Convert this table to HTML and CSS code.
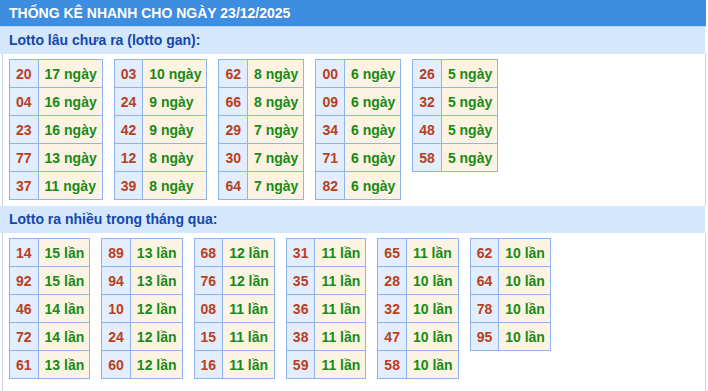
FILE: index.html
```html
<!DOCTYPE html>
<html lang="vi">
<head>
<meta charset="utf-8">
<link rel="stylesheet" href="styles.css">
</head>
<body>
<div class="page">
  <div class="header">THỐNG KÊ NHANH CHO NGÀY 23/12/2025</div>
  <div class="title">Lotto lâu chưa ra (lotto gan):</div>
  <div class="content">
    <table class="tbl">
      <tr><td class="num">20</td><td class="val">17 ngày</td></tr>
      <tr><td class="num">04</td><td class="val">16 ngày</td></tr>
      <tr><td class="num">23</td><td class="val">16 ngày</td></tr>
      <tr><td class="num">77</td><td class="val">13 ngày</td></tr>
      <tr><td class="num">37</td><td class="val">11 ngày</td></tr>
    </table>
    <table class="tbl">
      <tr><td class="num">03</td><td class="val">10 ngày</td></tr>
      <tr><td class="num">24</td><td class="val">9 ngày</td></tr>
      <tr><td class="num">42</td><td class="val">9 ngày</td></tr>
      <tr><td class="num">12</td><td class="val">8 ngày</td></tr>
      <tr><td class="num">39</td><td class="val">8 ngày</td></tr>
    </table>
    <table class="tbl">
      <tr><td class="num">62</td><td class="val">8 ngày</td></tr>
      <tr><td class="num">66</td><td class="val">8 ngày</td></tr>
      <tr><td class="num">29</td><td class="val">7 ngày</td></tr>
      <tr><td class="num">30</td><td class="val">7 ngày</td></tr>
      <tr><td class="num">64</td><td class="val">7 ngày</td></tr>
    </table>
    <table class="tbl">
      <tr><td class="num">00</td><td class="val">6 ngày</td></tr>
      <tr><td class="num">09</td><td class="val">6 ngày</td></tr>
      <tr><td class="num">34</td><td class="val">6 ngày</td></tr>
      <tr><td class="num">71</td><td class="val">6 ngày</td></tr>
      <tr><td class="num">82</td><td class="val">6 ngày</td></tr>
    </table>
    <table class="tbl">
      <tr><td class="num">26</td><td class="val">5 ngày</td></tr>
      <tr><td class="num">32</td><td class="val">5 ngày</td></tr>
      <tr><td class="num">48</td><td class="val">5 ngày</td></tr>
      <tr><td class="num">58</td><td class="val">5 ngày</td></tr>
    </table>
  </div>
  <div class="title">Lotto ra nhiều trong tháng qua:</div>
  <div class="content last">
    <table class="tbl">
      <tr><td class="num">14</td><td class="val">15 lần</td></tr>
      <tr><td class="num">92</td><td class="val">15 lần</td></tr>
      <tr><td class="num">46</td><td class="val">14 lần</td></tr>
      <tr><td class="num">72</td><td class="val">14 lần</td></tr>
      <tr><td class="num">61</td><td class="val">13 lần</td></tr>
    </table>
    <table class="tbl">
      <tr><td class="num">89</td><td class="val">13 lần</td></tr>
      <tr><td class="num">94</td><td class="val">13 lần</td></tr>
      <tr><td class="num">10</td><td class="val">12 lần</td></tr>
      <tr><td class="num">24</td><td class="val">12 lần</td></tr>
      <tr><td class="num">60</td><td class="val">12 lần</td></tr>
    </table>
    <table class="tbl">
      <tr><td class="num">68</td><td class="val">12 lần</td></tr>
      <tr><td class="num">76</td><td class="val">12 lần</td></tr>
      <tr><td class="num">08</td><td class="val">11 lần</td></tr>
      <tr><td class="num">15</td><td class="val">11 lần</td></tr>
      <tr><td class="num">16</td><td class="val">11 lần</td></tr>
    </table>
    <table class="tbl">
      <tr><td class="num">31</td><td class="val">11 lần</td></tr>
      <tr><td class="num">35</td><td class="val">11 lần</td></tr>
      <tr><td class="num">36</td><td class="val">11 lần</td></tr>
      <tr><td class="num">38</td><td class="val">11 lần</td></tr>
      <tr><td class="num">59</td><td class="val">11 lần</td></tr>
    </table>
    <table class="tbl">
      <tr><td class="num">65</td><td class="val">11 lần</td></tr>
      <tr><td class="num">28</td><td class="val">10 lần</td></tr>
      <tr><td class="num">32</td><td class="val">10 lần</td></tr>
      <tr><td class="num">47</td><td class="val">10 lần</td></tr>
      <tr><td class="num">58</td><td class="val">10 lần</td></tr>
    </table>
    <table class="tbl">
      <tr><td class="num">62</td><td class="val">10 lần</td></tr>
      <tr><td class="num">64</td><td class="val">10 lần</td></tr>
      <tr><td class="num">78</td><td class="val">10 lần</td></tr>
      <tr><td class="num">95</td><td class="val">10 lần</td></tr>
    </table>
  </div>
</div>
</body>
</html>
```
FILE: styles.css
```css
html, body {
  margin: 0;
  padding: 0;
  background: #ffffff;
}
body {
  font-family: "Liberation Sans", Arial, sans-serif;
  width: 708px;
  height: 391px;
  overflow: hidden;
}
.page {
  width: 706px;
  height: 391px;
  display: flex;
  flex-direction: column;
}
.header {
  height: 27px;
  line-height: 26px;
  background: #3d8de0;
  color: #ffffff;
  font-weight: bold;
  font-size: 14px;
  padding-left: 9px;
  border-bottom: 1px solid #b9d6f4;
  box-sizing: border-box;
}
.title {
  width: 705px;
  height: 27px;
  line-height: 27px;
  background: #d4e7fb;
  color: #1547ad;
  font-weight: bold;
  font-size: 14px;
  padding-left: 9px;
  box-sizing: border-box;
}
.content {
  margin-left: 2px;
  width: 704px;
  box-sizing: border-box;
  border-left: 1px solid #c9d3e2;
  border-right: 1px solid #c9d3e2;
  padding: 5px 6px 6px 6px;
  display: flex;
  align-items: flex-start;
  gap: 11px;
}
.content.last {
  flex: 1;
  padding-bottom: 0;
}
.tbl {
  border-collapse: collapse;
  font-size: 14px;
  font-weight: bold;
}
.tbl td {
  border: 1px solid #8db4ee;
  height: 28px;
  box-sizing: border-box;
  padding: 0 6px;
  white-space: nowrap;
}
.tbl td.val {
  padding: 0 5px 0 6px;
}
.num {
  background: #e2eefd;
  color: #b8401c;
  text-align: center;
}
.val {
  background: #fdf3e3;
  color: #198a17;
}
```
